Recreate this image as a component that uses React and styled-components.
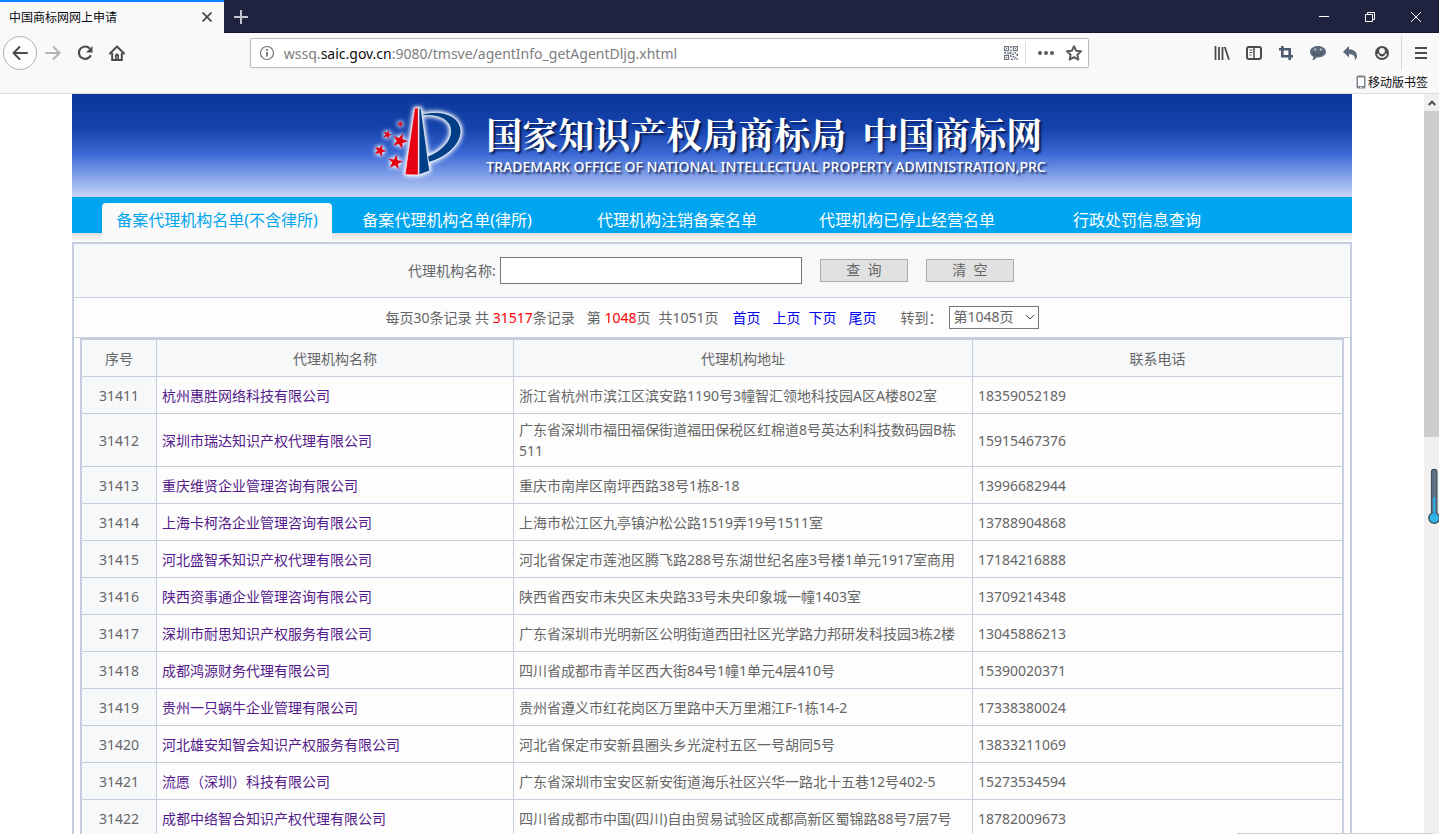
import React from 'react'
import styled, { createGlobalStyle } from 'styled-components'

const agents = [
    { id: 31411, name: '杭州惠胜网络科技有限公司', address: '浙江省杭州市滨江区滨安路1190号3幢智汇领地科技园A区A楼802室', phone: '18359052189' },
    { id: 31412, name: '深圳市瑞达知识产权代理有限公司', address: '广东省深圳市福田福保街道福田保税区红棉道8号英达利科技数码园B栋511', phone: '15915467376' },
    { id: 31413, name: '重庆维贤企业管理咨询有限公司', address: '重庆市南岸区南坪西路38号1栋8-18', phone: '13996682944' },
    { id: 31414, name: '上海卡柯洛企业管理咨询有限公司', address: '上海市松江区九亭镇沪松公路1519弄19号1511室', phone: '13788904868' },
    { id: 31415, name: '河北盛智禾知识产权代理有限公司', address: '河北省保定市莲池区腾飞路288号东湖世纪名座3号楼1单元1917室商用', phone: '17184216888' },
    { id: 31416, name: '陕西资事通企业管理咨询有限公司', address: '陕西省西安市未央区未央路33号未央印象城一幢1403室', phone: '13709214348' },
    { id: 31417, name: '深圳市耐思知识产权服务有限公司', address: '广东省深圳市光明新区公明街道西田社区光学路力邦研发科技园3栋2楼', phone: '13045886213' },
    { id: 31418, name: '成都鸿源财务代理有限公司', address: '四川省成都市青羊区西大街84号1幢1单元4层410号', phone: '15390020371' },
    { id: 31419, name: '贵州一只蜗牛企业管理有限公司', address: '贵州省遵义市红花岗区万里路中天万里湘江F-1栋14-2', phone: '17338380024' },
    { id: 31420, name: '河北雄安知智会知识产权服务有限公司', address: '河北省保定市安新县圈头乡光淀村五区一号胡同5号', phone: '13833211069' },
    { id: 31421, name: '流愿（深圳）科技有限公司', address: '广东省深圳市宝安区新安街道海乐社区兴华一路北十五巷12号402-5', phone: '15273534594' },
    { id: 31422, name: '成都中络智合知识产权代理有限公司', address: '四川省成都市中国(四川)自由贸易试验区成都高新区蜀锦路88号7层7号', phone: '18782009673' },
]

const tabs = [
    '备案代理机构名单(不含律所)',
    '备案代理机构名单(律所)',
    '代理机构注销备案名单',
    '代理机构已停止经营名单',
    '行政处罚信息查询',
]

const Icon = ({ size = 16, children, ...rest }) => (
    <svg width={size} height={size} viewBox="0 0 16 16" fill="none" stroke="currentColor" strokeWidth="2" aria-hidden="true" {...rest}>
        {children}
    </svg>
)

const BackIcon = () => (
    <Icon strokeLinecap="round" strokeLinejoin="round"><path d="M15 8H1.5M7.5 2 1.5 8l6 6" /></Icon>
)
const ForwardIcon = () => (
    <Icon strokeLinecap="round" strokeLinejoin="round"><path d="M1 8h13.5M8.500 2l6 6-6 6" /></Icon>
)
const ReloadIcon = () => (
    <Icon>
        <path d="M12.800 3.600A6.200 6.200 0 1 0 13.800 10.200" strokeWidth="2.200" />
        <path d="M15.500 1v6.500H9z" fill="currentColor" stroke="none" />
    </Icon>
)
const HomeIcon = () => (
    <Icon>
        <path d="M1 8.500 8 1.500l7 7" strokeLinecap="round" strokeLinejoin="round" />
        <path d="M3.200 8v7h9.600V8" />
        <path d="M6 15v-4.500a2 2 0 0 1 4 0V15z" fill="currentColor" stroke="none" />
        <path d="M8 11.500v2" stroke="#f9f9fa" strokeWidth="1" />
    </Icon>
)
const InfoIcon = () => (
    <Icon strokeWidth="1.200">
        <circle cx="8" cy="8" r="6.500" />
        <path d="M8 7v4.500M8 4v1.700" strokeWidth="1.800" />
    </Icon>
)
const QrIcon = () => (
    <Icon strokeWidth="1.200">
        <path d="M1.600 1.600h4v4h-4zM10.400 1.600h4v4h-4zM1.600 10.400h4v4h-4z" />
        <path d="M3 3h1.200v1.200H3zM11.800 3H13v1.200h-1.200zM3 11.800h1.200V13H3zM7.300 1h1.400v2H7.300zM7.300 4.500h1.400v2H7.300zM1 7h2v1.600H1zM4 7.500h2V9H4zM6.500 7h2v2h-2zM9 8.500h2V10H9zM11.500 7h1.500v1.500h-1.500zM13.500 8.500H15V11h-1.500zM7 10h1.500v2H7zM9.500 11h2v1.500h-2zM12 12h1.500v1.500H12zM8 13.500h2V15H8zM11 13.500h1V15h-1zM13.700 13.500H15V15h-1.300z" fill="currentColor" stroke="none" />
    </Icon>
)
const DotsIcon = () => (
    <Icon fill="currentColor" stroke="none">
        <circle cx="2" cy="8" r="2" />
        <circle cx="8" cy="8" r="2" />
        <circle cx="14" cy="8" r="2" />
    </Icon>
)
const StarIcon = () => (
    <Icon strokeLinejoin="round"><path d="M8 1.200l2.100 4.500 4.900.6-3.600 3.400.9 4.900L8 12.200l-4.300 2.400.9-4.900L1 6.300l4.900-.6z" /></Icon>
)
const LibraryIcon = () => (
    <Icon><path d="M1.500 1v14M5 2v13M8.500 2v13M10.800 2l4.200 12.800" strokeWidth="1.800" /></Icon>
)
const SidebarIcon = () => (
    <Icon>
        <rect x="1" y="2" width="14" height="12" rx="2" />
        <path d="M8 2v12" strokeWidth="1.500" />
        <path d="M3.500 5h3M3.500 7.500h3M3.500 10h2" strokeWidth="1" />
    </Icon>
)
const CropIcon = () => (
    <Icon strokeWidth="2.600"><path d="M4.300 1v10.300H15M1 4.300h10.700V15" /></Icon>
)
const ChatIcon = () => (
    <Icon stroke="none">
        <path d="M8 1c4.500 0 8 2.500 8 5.800S12.500 12.500 8 12.500c-.5 0-1 0-1.500-.1C5.500 14 4 15 2.200 15c.8-1 1.200-2 1.100-3.300C1.300 10.600 0 8.900 0 6.800 0 3.500 3.500 1 8 1z" fill="currentColor" />
        <circle cx="5.200" cy="4.500" r="1" fill="#cfd5dc" />
        <circle cx="10.800" cy="4.500" r="1" fill="#cfd5dc" />
        <path d="M3 7.500c2.500 3 7.500 3 10 0" stroke="#4a5a6b" />
    </Icon>
)
const UndoIcon = () => (
    <Icon stroke="none"><path d="M7 1v3.300c5 .2 8 3 8 6.700 0 1.700-.7 3-2.200 4 .5-3.500-1.300-5.800-5.800-5.900V12.500L1 6.800z" fill="currentColor" /></Icon>
)
const AccountIcon = () => (
    <Icon>
        <circle cx="8" cy="8" r="7" fill="currentColor" stroke="none" />
        <circle cx="8" cy="6" r="2.900" fill="#f9f9fa" stroke="none" />
        <path d="M3.600 8.800c.8 2.200 2.400 3.400 4.400 3.400s3.600-1.200 4.400-3.400" stroke="#f9f9fa" strokeWidth="1.500" />
    </Icon>
)
const MenuIcon = () => (
    <Icon><path d="M2 3h12M2 8h12M2 13h12" /></Icon>
)
const PhoneIcon = () => (
    <svg width="10" height="14" viewBox="0 0 10 14" aria-hidden="true">
        <rect x="0.500" y="0.500" width="9" height="13" rx="1.500" fill="#7d858d" />
        <rect x="2" y="2.500" width="6" height="8.500" fill="#fdfdfd" />
        <rect x="4" y="12" width="2" height="1" fill="#dddddd" />
    </svg>
)

const star = (cx, cy, r, turn) => {
    const points = []
    for (let i = 0; i < 10; i++) {
        const radius = i % 2 === 0 ? r : r * 0.4
        const angle = ((turn - 90 + i * 36) * Math.PI) / 180
        points.push(`${(cx + radius * Math.cos(angle)).toFixed(1)},${(cy + radius * Math.sin(angle)).toFixed(1)}`)
    }
    return points.join(' ')
}

const Logo = () => (
    <LogoSvg viewBox="36 24 294 246" aria-hidden="true">
        <g fill="#e60012">
            <polygon points={star(127, 90, 10, 20)} />
            <polygon points={star(88, 122, 14, 20)} />
            <polygon points={star(126, 141, 24, 20)} />
            <polygon points={star(66, 170, 19, 20)} />
            <polygon points={star(112, 205, 23, 10)} />
        </g>
        <polygon points="170,42 181,42 181,243 141,242" fill="#e60012" stroke="#fff" strokeWidth="2" />
        <polygon points="183,42 189,42 215,231 183,242" fill="#003f88" stroke="#fff" strokeWidth="2" />
        <path d="M194 60C258 44 309 70 309 112C308 156 257 194 212 205L209 187C248 171 279 142 278 110C277 76 240 61 194 65Z" fill="#003f88" stroke="#fff" strokeWidth="2" />
    </LogoSvg>
)

const Thermometer = () => (
    <ThermometerSvg viewBox="0 0 12 58" aria-hidden="true">
        <path d="M3.500 46V4a2.700 2.700 0 0 1 5.400 0v42" fill="#617383" stroke="#3f4d59" strokeWidth="1.200" />
        <circle cx="6.200" cy="50" r="5.400" fill="#34b4e4" stroke="#3f5563" strokeWidth="1.400" />
        <path d="M6.200 29v20" stroke="#29abe2" strokeWidth="2.400" />
    </ThermometerSvg>
)

class AgentTable extends React.Component {
    printRow = (item) => {
        return (
            <tr key={item.id}>
                <Cell $shaded $center>{item.id}</Cell>
                <Cell><AgentLink href="#">{item.name}</AgentLink></Cell>
                <Cell>{item.address}</Cell>
                <Cell>{item.phone}</Cell>
            </tr>
        )
    }

    render() {
        return (
            <Table>
                <colgroup>
                    <Col $width="75px" />
                    <Col $width="357px" />
                    <Col $width="459px" />
                    <Col $width="auto" />
                </colgroup>
                <thead>
                    <tr>
                        <HeadCell>序号</HeadCell>
                        <HeadCell>代理机构名称</HeadCell>
                        <HeadCell>代理机构地址</HeadCell>
                        <HeadCell>联系电话</HeadCell>
                    </tr>
                </thead>
                <tbody>{agents.map(this.printRow)}</tbody>
            </Table>
        )
    }
}

const App = () => (
    <Root>
        <GlobalStyle />
        <TitleBar>
            <BrowserTab>
                <span>中国商标网网上申请</span>
                <TabClose aria-label="关闭标签页">
                    <svg width="10" height="10" viewBox="0 0 10 10" stroke="#4a4a4f" strokeWidth="1.800"><path d="M.5.5l9 9M9.500.5l-9 9" /></svg>
                </TabClose>
            </BrowserTab>
            <NewTab aria-label="新标签页">
                <svg width="14" height="14" viewBox="0 0 14 14" stroke="#c4c4ce" strokeWidth="2"><path d="M7 0v14M0 7h14" /></svg>
            </NewTab>
            <WindowControls>
                <WindowButton aria-label="最小化">
                    <svg width="10" height="10" viewBox="0 0 10 10" stroke="#fff"><path d="M0 4.500h10" /></svg>
                </WindowButton>
                <WindowButton aria-label="还原">
                    <svg width="10" height="10" viewBox="0 0 10 10" stroke="#fff" fill="none"><path d="M.5 2.500h7v7h-7zM2.500 2.500v-2h7v7h-2" /></svg>
                </WindowButton>
                <WindowButton aria-label="关闭">
                    <svg width="10" height="10" viewBox="0 0 10 10" stroke="#fff"><path d="M0 0l10 10M10 0L0 10" /></svg>
                </WindowButton>
            </WindowControls>
        </TitleBar>

        <Toolbar>
            <BackButton aria-label="后退"><BackIcon /></BackButton>
            <ToolButton $tone="#b4b4b6" aria-label="前进"><ForwardIcon /></ToolButton>
            <ToolButton aria-label="刷新"><ReloadIcon /></ToolButton>
            <ToolButton aria-label="主页"><HomeIcon /></ToolButton>
            <Spacer />
            <UrlBar>
                <UrlButton aria-label="网站信息" $tone="#737377"><InfoIcon /></UrlButton>
                <UrlField>
                    <UrlText>wssq.<b>saic.gov.cn</b>:9080/tmsve/agentInfo_getAgentDljg.xhtml</UrlText>
                    <UrlInput type="text" aria-label="地址栏" />
                </UrlField>
                <UrlButton aria-label="二维码" $tone="#6e7681"><QrIcon /></UrlButton>
                <UrlDivider />
                <UrlButton aria-label="页面操作"><DotsIcon /></UrlButton>
                <UrlButton aria-label="收藏"><StarIcon /></UrlButton>
            </UrlBar>
            <Spacer />
            <ToolButton aria-label="书架"><LibraryIcon /></ToolButton>
            <ToolButton aria-label="侧栏"><SidebarIcon /></ToolButton>
            <ToolButton $tone="#4b5b6b" aria-label="截图"><CropIcon /></ToolButton>
            <ToolButton $tone="#5b6b7b" aria-label="聊天"><ChatIcon /></ToolButton>
            <ToolButton $tone="#5b6b7b" aria-label="撤销"><UndoIcon /></ToolButton>
            <ToolButton aria-label="账户"><AccountIcon /></ToolButton>
            <ToolDivider />
            <ToolButton aria-label="菜单"><MenuIcon /></ToolButton>
        </Toolbar>
        <BookmarkBar>
            <Bookmark href="#"><PhoneIcon />移动版书签</Bookmark>
        </BookmarkBar>

        <Viewport>
            <Scroller>
                <Page>
                    <Banner>
                        <Logo />
                        <BannerText>
                            <BannerTitle>
                                <span>国家知识产权局商标局</span>
                                <span>中国商标网</span>
                            </BannerTitle>
                            <BannerSub>TRADEMARK OFFICE OF NATIONAL INTELLECTUAL PROPERTY ADMINISTRATION,PRC</BannerSub>
                        </BannerText>
                    </Banner>
                    <Nav>
                        {tabs.map((label, i) => (
                            <NavLink key={label} href="#" $active={i === 0}>{label}</NavLink>
                        ))}
                    </Nav>
                    <Panel>
                        <SearchRow>
                            <label htmlFor="agentName">代理机构名称:</label>
                            <SearchInput id="agentName" type="text" />
                            <FormButton type="button">查  询</FormButton>
                            <FormButton type="button">清  空</FormButton>
                        </SearchRow>
                        <Pager>
                            <PagerText $after="12px">每页30条记录 共 <Red>31517</Red>条记录</PagerText>
                            <PagerText $after="8px">第 <Red>1048</Red>页</PagerText>
                            <PagerText $after="14px">共1051页</PagerText>
                            <PagerLink href="#" $after="12px">首页</PagerLink>
                            <PagerLink href="#" $after="8px">上页</PagerLink>
                            <PagerLink href="#" $after="12px">下页</PagerLink>
                            <PagerLink href="#" $after="24px">尾页</PagerLink>
                            <label htmlFor="pageNo">转到：</label>
                            <SelectBox>
                                <PageSelect id="pageNo" defaultValue="1048">
                                    <option value="1047">第1047页</option>
                                    <option value="1048">第1048页</option>
                                    <option value="1049">第1049页</option>
                                </PageSelect>
                                <Chevron viewBox="0 0 8 8" aria-hidden="true"><path d="M0 2l4 4 4-4" /></Chevron>
                            </SelectBox>
                        </Pager>
                        <TableWrap><AgentTable /></TableWrap>
                    </Panel>
                </Page>
            </Scroller>
            <ScrollTrack>
                <ScrollUp aria-label="向上滚动">
                    <svg width="8" height="8" viewBox="0 0 8 8" fill="none" stroke="#505050" strokeWidth="2"><path d="M.7 6L4 2.700 7.300 6" /></svg>
                </ScrollUp>
                <ScrollThumb />
            </ScrollTrack>
            <Thermometer />
            <StatusEdge />
        </Viewport>
    </Root>
)

const GlobalStyle = createGlobalStyle`
    *{
        box-sizing:border-box;
    }
    body{
        margin:0;
        background-color:#fff;
        font-family:"Noto Sans","Noto Sans CJK SC",sans-serif;
        font-size:14px;
        color:#666;
    }
    button{
        padding:0;
        border:0;
        background:none;
        font:inherit;
        color:inherit;
    }
    a{
        text-decoration:none;
    }
`

const Root = styled.div`
    display:flex;
    flex-direction:column;
    height:100vh;
    overflow:hidden;
`

const TitleBar = styled.div`
    display:flex;
    flex:none;
    height:33px;
    background-color:#202340;
    box-shadow:inset 0 -1px 0 #14162b;
`
const BrowserTab = styled.div`
    display:flex;
    align-items:center;
    justify-content:space-between;
    width:224px;
    padding:0 9px 2px;
    border-top:2px solid #0a84ff;
    background-color:#f9f9fa;
    font-size:12px;
    color:#0c0c0d;
`
const TabClose = styled.button`
    display:flex;
    align-items:center;
    justify-content:center;
    width:16px;
    height:16px;
`
const NewTab = styled.button`
    display:flex;
    align-items:center;
    justify-content:center;
    width:34px;
`
const WindowControls = styled.div`
    display:flex;
    margin-left:auto;
`
const WindowButton = styled.button`
    display:flex;
    align-items:center;
    justify-content:center;
    width:46px;
`

const Toolbar = styled.div`
    display:flex;
    flex:none;
    align-items:center;
    height:40px;
    padding:0 2px 0 3px;
    background-color:#f9f9fa;
`
const ToolButton = styled.button`
    display:flex;
    flex:none;
    align-items:center;
    justify-content:center;
    width:32px;
    height:32px;
    color:${props => props.$tone || '#4a4a4f'};
`
const BackButton = styled(ToolButton)`
    width:34px;
    height:34px;
    border:1px solid #b1b1b3;
    border-radius:50%;
    background-color:#fdfdfd;
`
const ToolDivider = styled.div`
    width:1px;
    height:34px;
    margin:0 3px;
    background-color:#d7d7db;
`
const Spacer = styled.div`
    flex:6;
`
const UrlBar = styled.div`
    display:flex;
    flex:43;
    align-items:center;
    height:30px;
    border:1px solid #bcbcbe;
    border-radius:2px;
    background-color:#fff;
    box-shadow:0 1px 3px rgba(0,0,0,0.06);
`
const UrlButton = styled.button`
    display:flex;
    align-items:center;
    justify-content:center;
    width:28px;
    height:28px;
    color:${props => props.$tone || '#5a5a5e'};
    &:first-child{
        width:32px;
    }
`
const UrlField = styled.div`
    display:grid;
    flex:1;
    align-items:center;
    > *{
        grid-area:1 / 1;
    }
`
const UrlText = styled.span`
    padding-left:1px;
    font-size:14px;
    color:#7d7d80;
    b{
        font-weight:400;
        color:#0c0c0d;
    }
`
const UrlInput = styled.input`
    width:100%;
    height:24px;
    padding:0;
    border:0;
    outline:0;
    background:transparent;
    font:inherit;
`
const UrlDivider = styled.div`
    width:1px;
    height:22px;
    margin-right:6px;
    background-color:#dcdcde;
`

const BookmarkBar = styled.div`
    display:flex;
    flex:none;
    justify-content:flex-end;
    height:21px;
    padding-right:11px;
    border-bottom:1px solid #dcdcde;
    background-color:#f9f9fa;
`
const Bookmark = styled.a`
    display:flex;
    align-items:center;
    gap:2px;
    height:18px;
    font-size:12px;
    color:#0c0c0d;
`

const Viewport = styled.div`
    position:relative;
    display:flex;
    flex:1;
    min-height:0;
`
const Scroller = styled.div`
    flex:1;
    overflow:hidden;
`
const ScrollTrack = styled.div`
    display:flex;
    flex-direction:column;
    width:15px;
    background-color:#f0f0f0;
`
const ScrollUp = styled.button`
    display:flex;
    align-items:center;
    justify-content:center;
    height:17px;
`
const ScrollThumb = styled.div`
    height:44%;
    background-color:#cdcdcd;
`
const ThermometerSvg = styled.svg`
    position:absolute;
    top:374px;
    right:-1px;
    width:12px;
    height:58px;
`
const StatusEdge = styled.div`
    position:absolute;
    right:6px;
    bottom:0;
    width:196px;
    height:1px;
    background-color:#cfcfcf;
`

const Page = styled.div`
    max-width:1280px;
    margin:0 auto;
`
const Banner = styled.header`
    display:flex;
    justify-content:center;
    gap:18px;
    height:103px;
    padding:8px 8px 0 0;
    background:linear-gradient(#0b3799 0%,#1443ad 33%,#3a68d4 58%,#7d9de8 78%,#c8d6f6 100%);
`
const LogoSvg = styled.svg`
    width:98px;
    height:82px;
    filter:drop-shadow(0 0 2px #fff) drop-shadow(0 0 2px rgba(255,255,255,0.8));
`
const BannerText = styled.div`
    display:flex;
    flex-direction:column;
    padding-top:13px;
    color:#fff;
    white-space:nowrap;
    text-shadow:2px 2px 2px rgba(0,10,50,0.8);
`
const BannerTitle = styled.h1`
    display:flex;
    gap:16px;
    margin:0;
    font-family:"Liberation Serif","Noto Serif CJK SC","Noto Sans CJK SC",serif;
    font-size:36px;
    font-weight:700;
    line-height:44px;
`
const BannerSub = styled.p`
    margin:0;
    font-family:"Noto Sans",sans-serif;
    font-size:14px;
    font-weight:500;
    line-height:16px;
`

const Nav = styled.nav`
    display:flex;
    height:45px;
    padding:6px 30px 0;
    background:linear-gradient(#00a5f0 0 36px,#e0e0e0 36px,#fbfbfb 45px);
`
const NavLink = styled.a`
    flex:0 1 230px;
    border-radius:4px 4px 0 0;
    background-color:${props => props.$active ? '#fafafa' : 'transparent'};
    font-size:16px;
    line-height:34px;
    text-align:center;
    white-space:nowrap;
    color:${props => props.$active ? '#00a5f0' : '#fff'};
`

const Panel = styled.main`
    border:2px solid #c5cddf;
    background-color:#fdfdfd;
`
const SearchRow = styled.form`
    display:flex;
    align-items:center;
    justify-content:center;
    height:54px;
    padding:0 2px 1px 0;
    border-bottom:1px solid #c5cddf;
    background-color:#f7f8fa;
`
const SearchInput = styled.input`
    width:302px;
    height:27px;
    margin-left:4px;
    padding:0 4px;
    border:1px solid #767676;
    background-color:#fff;
    font:inherit;
`
const FormButton = styled.button`
    width:88px;
    height:23px;
    margin-left:18px;
    border:1px solid #adadad;
    background-color:#e1e1e1;
    line-height:20px;
    white-space:pre;
`
const Pager = styled.div`
    display:flex;
    align-items:center;
    justify-content:center;
    height:40px;
    padding-bottom:1px;
    border-bottom:1px solid #c5cddf;
`
const PagerText = styled.span`
    margin-right:${props => props.$after};
`
const PagerLink = styled.a`
    margin-right:${props => props.$after};
    color:#0000ee;
`
const Red = styled.span`
    color:#ff0000;
`
const SelectBox = styled.div`
    display:grid;
    align-items:center;
    margin-left:6px;
    > *{
        grid-area:1 / 1;
    }
`
const PageSelect = styled.select`
    width:90px;
    height:23px;
    padding:0 4px;
    border:1px solid #767676;
    border-radius:0;
    appearance:none;
    background-color:#fff;
    font:inherit;
    line-height:20px;
    color:inherit;
`
const Chevron = styled.svg`
    justify-self:end;
    width:8px;
    height:8px;
    margin-right:5px;
    fill:none;
    stroke:#444;
    pointer-events:none;
`

const TableWrap = styled.div`
    padding:0 6px;
    background-color:#fff;
`
const Table = styled.table`
    width:100%;
    border:2px solid #c5cddf;
    border-spacing:0;
    table-layout:fixed;
    font:inherit;
    line-height:21px;
    color:inherit;
    tr{
        height:37px;
    }
`
const Col = styled.col`
    width:${props => props.$width};
`
const Cell = styled.td`
    padding:5px;
    border-right:1px solid #c5cddf;
    border-bottom:1px solid #c5cddf;
    background-color:${props => props.$shaded ? '#f7f8fa' : '#fdfdfd'};
    text-align:${props => props.$center ? 'center' : 'left'};
    &:last-child{
        border-right:0;
    }
`
const HeadCell = styled.th`
    padding:5px;
    border-right:1px solid #c5cddf;
    border-bottom:1px solid #c5cddf;
    background-color:#f7f8fa;
    font-weight:400;
    &:last-child{
        border-right:0;
    }
`
const AgentLink = styled.a`
    color:#551a8b;
`

export default App
